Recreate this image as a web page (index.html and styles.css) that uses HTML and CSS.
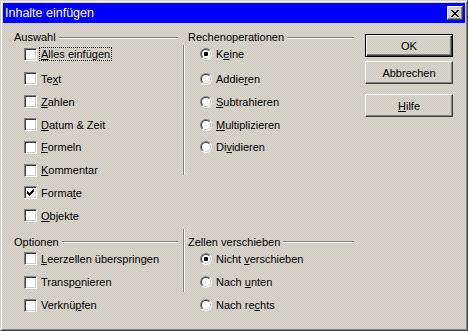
FILE: index.html
```html
<!DOCTYPE html>
<html lang="de">
<head>
<meta charset="utf-8">
<title>Inhalte einfügen</title>
<link rel="stylesheet" href="styles.css">
</head>
<body>
<div class="window">
  <div class="titlebar">
    <span class="title">Inhalte einfügen</span>
    <span class="close"><svg width="8" height="7" viewBox="0 0 8 7"><path d="M0 0h2v1H0zM6 0h2v1H6zM1 1h2v1H1zM5 1h2v1H5zM2 2h4v1H2zM3 3h2v1H3zM2 4h4v1H2zM1 5h2v1H1zM5 5h2v1H5zM0 6h2v1H0zM6 6h2v1H6z" fill="#000"/></svg></span>
  </div>
  <div class="content">
    <div class="main">
      <section class="group">
        <div class="legend"><span>Auswahl</span><i class="etch"></i></div>
        <ul class="items">
          <li class="row"><span class="cb"></span><span class="lbl focus"><u>A</u>lles einfügen</span></li>
          <li class="row"><span class="cb"></span><span class="lbl">Te<u>x</u>t</span></li>
          <li class="row"><span class="cb"></span><span class="lbl"><u>Z</u>ahlen</span></li>
          <li class="row"><span class="cb"></span><span class="lbl"><u>D</u>atum &amp; Zeit</span></li>
          <li class="row"><span class="cb"></span><span class="lbl"><u>F</u>ormeln</span></li>
          <li class="row"><span class="cb"></span><span class="lbl"><u>K</u>ommentar</span></li>
          <li class="row"><span class="cb"><svg width="7" height="7" viewBox="0 0 7 7"><path d="M6 0h1v1H6zM5 1h2v1H5zM0 2h1v1H0zM4 2h3v1H4zM0 3h2v1H0zM3 3h3v1H3zM0 4h5v1H0zM1 5h3v1H1zM2 6h1v1H2z" fill="#000"/></svg></span><span class="lbl">Forma<u>t</u>e</span></li>
          <li class="row"><span class="cb"></span><span class="lbl"><u>O</u>bjekte</span></li>
        </ul>
      </section>
      <div class="vsep vsep-top"></div>
      <section class="group">
        <div class="legend"><span>Rechenoperationen</span><i class="etch"></i></div>
        <ul class="items">
          <li class="row"><span class="rb"><span class="rb-in"><span class="dot"></span></span></span><span class="lbl">K<u>e</u>ine</span></li>
          <li class="row"><span class="rb"><span class="rb-in"></span></span><span class="lbl">Addie<u>r</u>en</span></li>
          <li class="row"><span class="rb"><span class="rb-in"></span></span><span class="lbl"><u>S</u>ubtrahieren</span></li>
          <li class="row"><span class="rb"><span class="rb-in"></span></span><span class="lbl"><u>M</u>ultiplizieren</span></li>
          <li class="row"><span class="rb"><span class="rb-in"></span></span><span class="lbl">Di<u>v</u>idieren</span></li>
        </ul>
      </section>

      <section class="group lower">
        <div class="legend"><span>Optionen</span><i class="etch"></i></div>
        <ul class="items tight">
          <li class="row"><span class="cb"></span><span class="lbl"><u>L</u>eerzellen überspringen</span></li>
          <li class="row"><span class="cb"></span><span class="lbl">Transp<u>o</u>nieren</span></li>
          <li class="row"><span class="cb"></span><span class="lbl">Verknü<u>p</u>fen</span></li>
        </ul>
      </section>
      <div class="vsep vsep-bottom"></div>
      <section class="group lower">
        <div class="legend"><span>Zellen verschieben</span><i class="etch"></i></div>
        <ul class="items tight">
          <li class="row"><span class="rb"><span class="rb-in"><span class="dot"></span></span></span><span class="lbl">Nicht <u>v</u>erschieben</span></li>
          <li class="row"><span class="rb"><span class="rb-in"></span></span><span class="lbl">Nach <u>u</u>nten</span></li>
          <li class="row"><span class="rb"><span class="rb-in"></span></span><span class="lbl">Nach re<u>c</u>hts</span></li>
        </ul>
      </section>
    </div>
    <div class="buttons">
      <button class="btn default" type="button">OK</button>
      <button class="btn btn-cancel" type="button">Abbrechen</button>
      <button class="btn btn-help" type="button"><u>H</u>ilfe</button>
    </div>
  </div>
</div>
</body>
</html>
```
FILE: styles.css
```css
* { box-sizing: border-box; }
html, body { margin: 0; padding: 0; }
body {
  width: 468px;
  height: 331px;
  overflow: hidden;
  font-family: "Liberation Sans", Arial, sans-serif;
  font-size: 11px;
  color: #000;
}
.window {
  width: 468px;
  height: 331px;
  border: 1px solid;
  border-color: #d4d0c8 #404040 #404040 #d4d0c8;
  box-shadow: inset 1px 1px #fff, inset -1px -1px #808080;
  padding: 2px;
  background-color: #d4d0c8;
  background-image: repeating-conic-gradient(#d9d5cd 0 25%, #cfcbc3 0 50%);
  background-size: 2px 2px;
}
.titlebar {
  height: 20px;
  background: #0000ff;
  color: #fff;
  display: flex;
  align-items: center;
  justify-content: space-between;
  padding: 0 2px 0 2px;
  font-size: 12.5px;
}
.title { white-space: nowrap; }
.close {
  width: 16px;
  height: 14px;
  border: 1px solid;
  border-color: #fff #404040 #404040 #fff;
  box-shadow: inset -1px -1px #808080, inset 1px 1px #d4d0c8;
  background: #d4d0c8;
  display: flex;
  align-items: center;
  justify-content: center;
  padding-right: 1px;
}
.close svg { display: block; }
.content {
  display: flex;
  padding: 8px 0 0 11px;
}
.main {
  display: grid;
  grid-template-columns: 164px 10px 166px;
  align-items: start;
}
.legend {
  display: flex;
  align-items: center;
  height: 13px;
  line-height: 13px;
  white-space: nowrap;
}
.etch {
  flex: 1;
  height: 0;
  border-top: 1px solid #808080;
  border-bottom: 1px solid #fff;
  margin-left: 3px;
}
.items {
  list-style: none;
  margin: 0;
  padding: 0;
}
.row {
  display: flex;
  align-items: center;
  height: 22.8px;
  white-space: nowrap;
}
.row:first-child {
  height: 20px;
  margin-bottom: 3.6px;
}
.items.tight .row:first-child { margin-bottom: 2px; }
.lower { padding-top: 8.8px; }
.cb {
  flex: none;
  width: 13px;
  height: 13px;
  margin-left: 10px;
  border: 1px solid;
  border-color: #808080 #fff #fff #808080;
  box-shadow: inset 1px 1px #404040, inset -1px -1px #d4d0c8;
  background: #fff;
  display: flex;
  align-items: center;
  justify-content: center;
}
.cb svg { display: block; }
.rb {
  flex: none;
  width: 12px;
  height: 12px;
  margin-left: 12px;
  border-radius: 50%;
  border: 1px solid;
  border-color: #808080 #fff #fff #808080;
  display: flex;
}
.rb-in {
  flex: 1;
  border-radius: 50%;
  border: 1px solid;
  border-color: #404040 #d4d0c8 #d4d0c8 #404040;
  background: #fff;
  display: flex;
  align-items: center;
  justify-content: center;
}
.dot {
  width: 4px;
  height: 4px;
  border-radius: 1px;
  background: #000;
}
.lbl {
  display: inline-block;
  margin-left: 2px;
  padding: 0 1px;
  line-height: 12px;
  border: 1px solid transparent;
}
.lbl.focus { border: 1px dotted #000; }
.vsep {
  width: 2px;
  margin-left: 5px;
  border-left: 1px solid #808080;
  border-right: 1px solid #fff;
}
.vsep-top { margin-top: 14px; height: 130px; }
.vsep-bottom { margin-top: 1.8px; height: 63px; }
.buttons {
  display: flex;
  flex-direction: column;
  margin: 3px 0 0 11px;
}
.btn {
  width: 88px;
  height: 23px;
  padding: 0;
  font: inherit;
  color: #000;
  background: transparent;
  border: 1px solid;
  border-color: #fff #404040 #404040 #fff;
  box-shadow: inset -1px -1px #808080, inset 1px 1px #d4d0c8;
}
.btn.default {
  border-color: #000;
  box-shadow: inset 1px 1px #fff, inset -1px -1px #404040, inset -2px -2px #808080;
}
.btn-cancel { margin-top: 4px; }
.btn-help { margin-top: 10px; }
```
